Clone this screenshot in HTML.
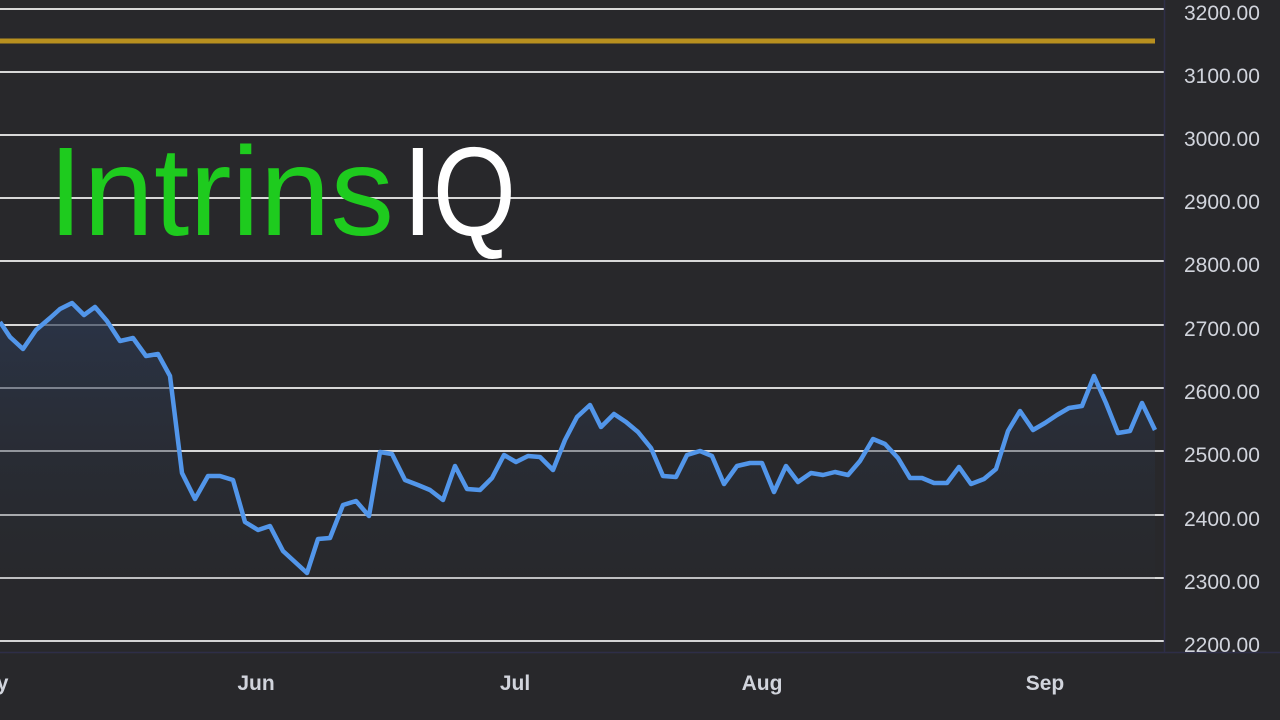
<!DOCTYPE html>
<html><head><meta charset="utf-8"><style>
html,body{margin:0;padding:0;background:#28282b;width:1280px;height:720px;overflow:hidden}
svg{display:block}
</style></head><body>
<svg width="1280" height="720" xmlns="http://www.w3.org/2000/svg">
<defs><linearGradient id="g" x1="0" y1="0" x2="0" y2="1"><stop offset="0" stop-color="#2b3a55" stop-opacity="0.7"/><stop offset="1" stop-color="#28282b" stop-opacity="0"/></linearGradient></defs>
<rect width="1280" height="720" fill="#28282b"/>
<g stroke="#d8d8d8" stroke-width="2">
<line x1="0" y1="9" x2="1164" y2="9"/><line x1="0" y1="72" x2="1164" y2="72"/><line x1="0" y1="135" x2="1164" y2="135"/><line x1="0" y1="198" x2="1164" y2="198"/><line x1="0" y1="261" x2="1164" y2="261"/><line x1="0" y1="325" x2="1164" y2="325"/><line x1="0" y1="388" x2="1164" y2="388"/><line x1="0" y1="451" x2="1164" y2="451"/><line x1="0" y1="515" x2="1164" y2="515"/><line x1="0" y1="578" x2="1164" y2="578"/><line x1="0" y1="641" x2="1164" y2="641"/>
</g>
<line x1="1164.5" y1="0" x2="1164.5" y2="653" stroke="#2e2e48" stroke-width="1.5"/>
<line x1="0" y1="652.5" x2="1280" y2="652.5" stroke="#2e2e48" stroke-width="1.5"/>
<line x1="0" y1="41" x2="1155" y2="41" stroke="#b8901f" stroke-width="5"/>
<polygon fill="url(#g)" points="0,322 0,652 1155,652 1155,430 1142,403 1130,431 1118,433 1106,403 1094,376 1082,406 1069,408 1057,415 1045,423 1033,430 1020,411 1008,431 996,469 984,479 971,484 959,467 947,483 934,483 922,478 910,478 898,458 885,444 873,439 860,461 848,475 835,472 823,475 811,473 798,482 786,466 774,492 762,463 750,463 737,466 724,484 712,456 700,451 687,455 676,477 663,476 651,448 638,432 626,422 614,414 601,427 590,405 577,417 565,440 553,470 540,457 528,456 516,462 504,455 492,478 480,490 467,489 455,466 443,500 430,490 418,485 405,480 392,454 380,452 369,516 356,501 343,505 330,538 318,539 307,573 295,562 283,551 270,526 258,530 245,522 233,480 220,476 208,476 195,499 182,473 170,376 158,354 146,356 133,338 120,341 107,321 95,307 84,315 72,303 60,309 50,318 36,330 23,349 10,337"/>
<polyline fill="none" stroke="#5296ea" stroke-width="4.5" stroke-linejoin="round" points="0,322 10,337 23,349 36,330 50,318 60,309 72,303 84,315 95,307 107,321 120,341 133,338 146,356 158,354 170,376 182,473 195,499 208,476 220,476 233,480 245,522 258,530 270,526 283,551 295,562 307,573 318,539 330,538 343,505 356,501 369,516 380,452 392,454 405,480 418,485 430,490 443,500 455,466 467,489 480,490 492,478 504,455 516,462 528,456 540,457 553,470 565,440 577,417 590,405 601,427 614,414 626,422 638,432 651,448 663,476 676,477 687,455 700,451 712,456 724,484 737,466 750,463 762,463 774,492 786,466 798,482 811,473 823,475 835,472 848,475 860,461 873,439 885,444 898,458 910,478 922,478 934,483 947,483 959,467 971,484 984,479 996,469 1008,431 1020,411 1033,430 1045,423 1057,415 1069,408 1082,406 1094,376 1106,403 1118,433 1130,431 1142,403 1155,430"/>
<g font-family="Liberation Sans, sans-serif" font-size="21" fill="#d1d4dc">
<text x="1184" y="20">3200.00</text><text x="1184" y="83">3100.00</text><text x="1184" y="146">3000.00</text><text x="1184" y="209">2900.00</text><text x="1184" y="272">2800.00</text><text x="1184" y="336">2700.00</text><text x="1184" y="399">2600.00</text><text x="1184" y="462">2500.00</text><text x="1184" y="526">2400.00</text><text x="1184" y="589">2300.00</text><text x="1184" y="652">2200.00</text>
</g>
<g font-family="Liberation Sans, sans-serif" font-size="21" font-weight="bold" fill="#d1d4dc" text-anchor="middle">
<text x="-12" y="690">May</text><text x="256" y="690">Jun</text><text x="515" y="690">Jul</text><text x="762" y="690">Aug</text><text x="1045" y="690">Sep</text>
</g>
<text x="48" y="235" font-family="Liberation Sans, sans-serif" font-size="126" fill="#1ecb1e" textLength="346" lengthAdjust="spacingAndGlyphs">Intrins</text>
<text x="403" y="235" font-family="Liberation Sans, sans-serif" font-size="126" fill="#ffffff" textLength="113" lengthAdjust="spacingAndGlyphs">IQ</text>
</svg>
</body></html>
